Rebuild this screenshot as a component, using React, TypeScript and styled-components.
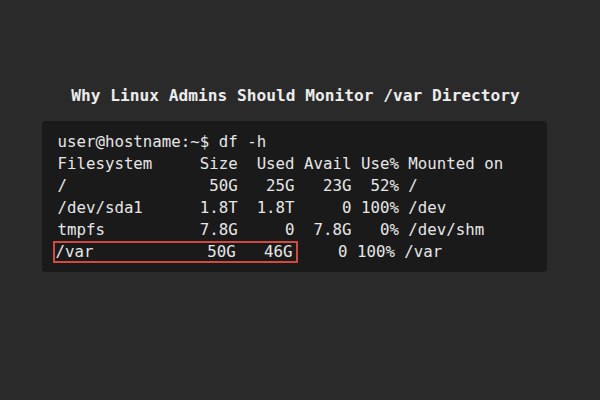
import React from "react";
import styled, { createGlobalStyle } from "styled-components";

const Global = createGlobalStyle`
  html, body { margin: 0; padding: 0; background: #2a2a2a; }
  body { width: 600px; height: 400px; overflow: hidden; }
`;

const Page = styled.div`
  width: 600px;
  height: 400px;
  display: flex;
  flex-direction: column;
  align-items: center;
  box-sizing: border-box;
  padding-top: 86px;
`;

const Title = styled.h1`
  margin: 0 0 15px -9px;
  font-family: "DejaVu Sans Mono", monospace;
  font-weight: bold;
  font-size: 16.2px;
  line-height: 20px;
  color: #ececec;
`;

const Terminal = styled.div`
  width: 505px;
  box-sizing: border-box;
  margin-left: -12px;
  background: #1a1a1a;
  border-radius: 4px;
  padding: 10px 16px 9px 16px;
`;

const Line = styled.div`
  font-family: "DejaVu Sans Mono", monospace;
  font-size: 15.75px;
  line-height: 22px;
  height: 22px;
  color: #e6e6e6;
  white-space: pre;
`;

const Highlight = styled.span`
  display: inline-block;
  line-height: 18px;
  border: 2px solid #d04a40;
  margin: 0 -7px 0 -5px;
  padding: 0 3px 0 1px;
`;

const rows = [
  "/               50G   25G   23G  52% /",
  "/dev/sda1      1.8T  1.8T     0 100% /dev",
  "tmpfs          7.8G     0  7.8G   0% /dev/shm",
];

export default function App() {
  return (
    <>
      <Global />
      <Page>
        <Title>Why Linux Admins Should Monitor /var Directory</Title>
        <Terminal>
          <Line>user@hostname:~$ df -h</Line>
          <Line>Filesystem     Size  Used Avail Use% Mounted on</Line>
          {rows.map((r) => (
            <Line key={r}>{r}</Line>
          ))}
          <Line>
            <Highlight>/var            50G   46G</Highlight>     0 100% /var
          </Line>
        </Terminal>
      </Page>
    </>
  );
}
